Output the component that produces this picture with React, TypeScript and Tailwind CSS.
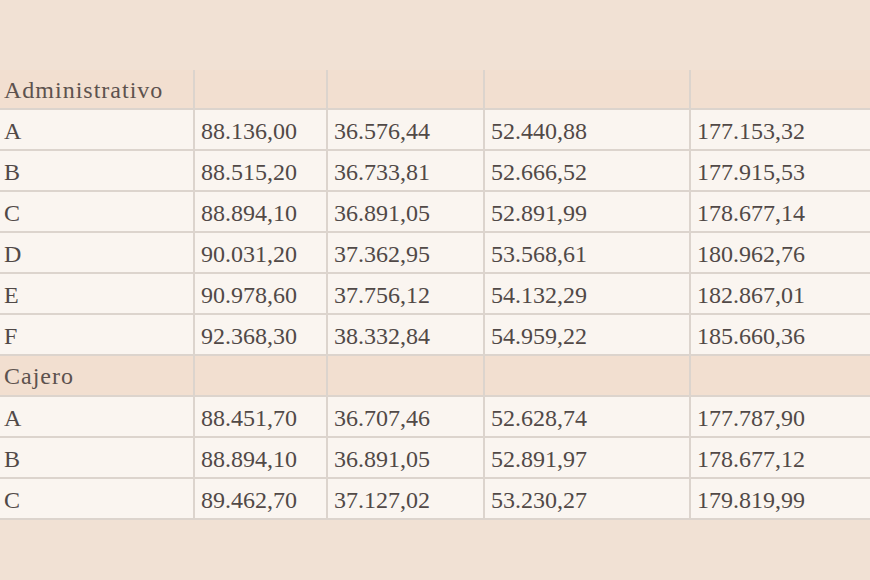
const rows: { group?: string; label?: string; values?: string[] }[] = [
  { group: 'Administrativo' },
  { label: 'A', values: ['88.136,00', '36.576,44', '52.440,88', '177.153,32'] },
  { label: 'B', values: ['88.515,20', '36.733,81', '52.666,52', '177.915,53'] },
  { label: 'C', values: ['88.894,10', '36.891,05', '52.891,99', '178.677,14'] },
  { label: 'D', values: ['90.031,20', '37.362,95', '53.568,61', '180.962,76'] },
  { label: 'E', values: ['90.978,60', '37.756,12', '54.132,29', '182.867,01'] },
  { label: 'F', values: ['92.368,30', '38.332,84', '54.959,22', '185.660,36'] },
  { group: 'Cajero' },
  { label: 'A', values: ['88.451,70', '36.707,46', '52.628,74', '177.787,90'] },
  { label: 'B', values: ['88.894,10', '36.891,05', '52.891,97', '178.677,12'] },
  { label: 'C', values: ['89.462,70', '37.127,02', '53.230,27', '179.819,99'] },
];

const cols = 'grid grid-cols-[193px_133px_157px_206px_1fr]';

export default function App() {
  return (
    <div
      className="w-[870px] h-[580px] overflow-hidden bg-[#f1e1d4] pt-[70px] text-[#514947] text-[24px]"
      style={{ fontFamily: '"Liberation Serif", "DejaVu Serif", serif' }}
    >
      {rows.map((row, i) =>
        row.group ? (
          <div
            key={i}
            className={`${cols} ${i === 0 ? 'h-[40px]' : 'h-[41px]'} bg-[#f2dfd0] border-b-2 border-[#dcd4cd]`}
          >
            <div className="flex items-center pl-[4px] pt-[1px] text-[#5d524e] tracking-[1px]">{row.group}</div>
            <div className="border-l-2 border-[#dcd4cd]" />
            <div className="border-l-2 border-[#dcd4cd]" />
            <div className="border-l-2 border-[#dcd4cd]" />
            <div className="border-l-2 border-[#dcd4cd]" />
          </div>
        ) : (
          <div key={i} className={`${cols} h-[41px] bg-[#faf5f0] border-b-2 border-[#dcd4cd]`}>
            <div className="flex items-center pl-[4px] pt-[3px]">{row.label}</div>
            {row.values!.map((v, j) => (
              <div key={j} className="flex items-center pl-[6px] pt-[3px] border-l-2 border-[#dcd4cd]">
                {v}
              </div>
            ))}
          </div>
        )
      )}
    </div>
  );
}
